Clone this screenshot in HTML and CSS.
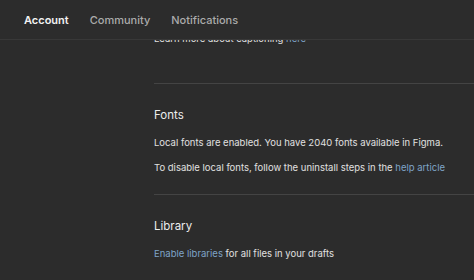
FILE: index.html
```html
<!DOCTYPE html>
<html>
<head>
<meta charset="utf-8">
<link rel="stylesheet" href="styles.css">
</head>
<body>
<div class="page">
  <header class="tabs">
    <span class="tab active">Account</span>
    <span class="tab">Community</span>
    <span class="tab">Notifications</span>
  </header>
  <main class="viewport">
    <div class="content">
      <section class="section first">
        <p class="text">Learn more about captioning <a class="link">here</a></p>
      </section>
      <section class="section">
        <h2 class="heading">Fonts</h2>
        <p class="text">Local fonts are enabled. You have 2040 fonts available in Figma.</p>
        <p class="text gap">To disable local fonts, follow the uninstall steps in the <a class="link">help article</a></p>
      </section>
      <section class="section">
        <h2 class="heading">Library</h2>
        <p class="text"><a class="link">Enable libraries</a> for all files in your drafts</p>
      </section>
    </div>
  </main>
</div>
</body>
</html>
```
FILE: styles.css
```css
html, body {
  margin: 0;
  padding: 0;
  background: #2c2c2c;
}
body {
  font-family: Inter, "Noto Sans", sans-serif;
  color: #e4e4e4;
  -webkit-font-smoothing: antialiased;
}
.page {
  width: 474px;
  height: 280px;
  display: flex;
  flex-direction: column;
  overflow: hidden;
}
.tabs {
  height: 40px;
  flex: none;
  display: flex;
  align-items: center;
  gap: 21px;
  padding-left: 24px;
  box-sizing: border-box;
  border-bottom: 1px solid #383838;
  position: relative;
  z-index: 1;
  background: #2c2c2c;
}
.tab {
  font-size: 11px;
  font-weight: 500;
  color: #ababab;
  line-height: 16px;
}
.tab.active {
  color: #f2f2f2;
  font-weight: 600;
}
.viewport {
  flex: 1;
  overflow: hidden;
}
.content {
  margin-top: -8.5px;
  padding-left: 154px;
}
.section {
  border-top: 1px solid #444;
  padding: 24px 0 19px;
}
.section.first {
  border-top: 0;
  padding: 0 0 37px;
}
.heading {
  margin: 0 0 14px;
  font-size: 11.5px;
  font-weight: 400;
  line-height: 14px;
  color: #ededed;
}
.text {
  margin: 0;
  font-size: 9.5px;
  line-height: 14px;
  color: #e0e0e0;
}
.text.gap {
  margin-top: 11px;
}
.link {
  color: #7fa4c8;
}
```
